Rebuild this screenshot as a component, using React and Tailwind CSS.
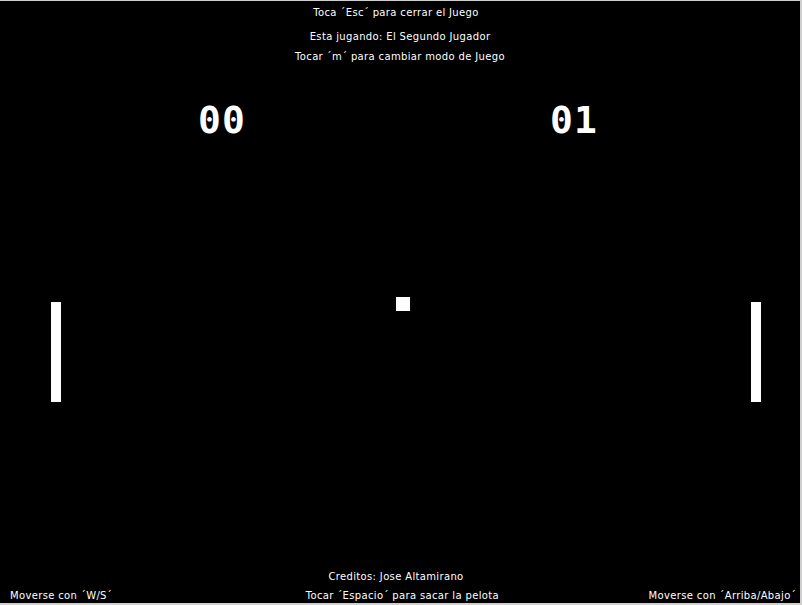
export default function App() {
  const font = { fontFamily: '"DejaVu Sans", "Liberation Sans", sans-serif' };
  return (
    <div className="w-[802px] h-[605px] bg-[#cfcfcf] pt-[1px] pr-[2px] pb-[2px]" style={font}>
      <div className="relative w-[800px] h-[602px] bg-[#000000] text-white flex flex-col text-[10px] leading-[12px] tracking-[0.35px]">
        <div className="flex flex-col items-center pt-[6px]">
          <div className="ml-[-8px]">Toca ´Esc´ para cerrar el Juego</div>
          <div className="mt-[12px]">Esta jugando: El Segundo Jugador</div>
          <div className="mt-[8px]">Tocar ´m´ para cambiar modo de Juego</div>
        </div>
        <div className="flex mt-[38px] text-[38px] leading-[38px] font-['DejaVu_Sans_Mono',monospace] font-bold tracking-[1px]">
          <div className="ml-[198px] w-[352px]">00</div>
          <div>01</div>
        </div>

        <div className="absolute left-[51px] top-[301px] w-[10px] h-[100px] bg-white" />
        <div className="absolute left-[396px] top-[296px] w-[14px] h-[14px] bg-white" />
        <div className="absolute left-[751px] top-[301px] w-[10px] h-[100px] bg-white" />

        <div className="flex-1" />
        <div className="flex justify-center">
          <div className="ml-[-8px]">Creditos: Jose Altamirano</div>
        </div>
        <div className="flex justify-between items-center mt-[7px] mb-[1px] px-[10px]">
          <div>Moverse con ´W/S´</div>
          <div className="ml-[44px]">Tocar ´Espacio´ para sacar la pelota</div>
          <div className="mr-[-6px]">Moverse con ´Arriba/Abajo´</div>
        </div>
      </div>
    </div>
  );
}
